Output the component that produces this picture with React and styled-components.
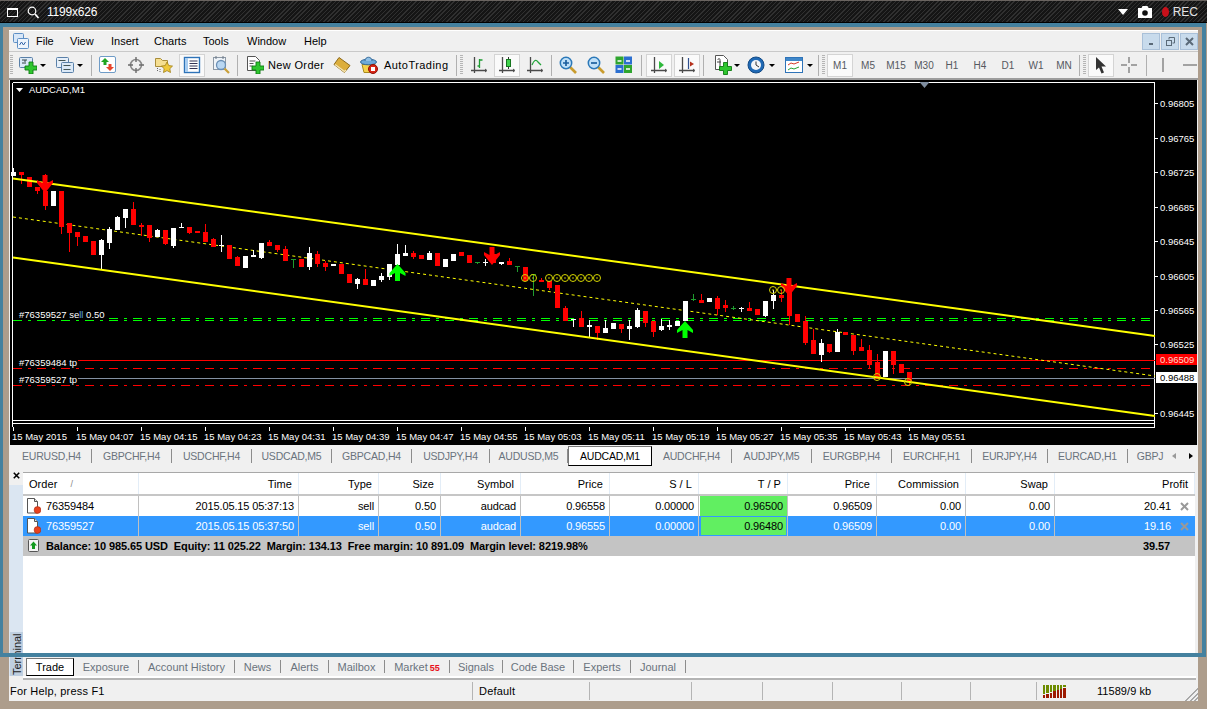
import React from 'react';
import styled, { createGlobalStyle } from 'styled-components';

const GlobalStyle = createGlobalStyle`
  html, body {
    margin: 0;
    padding: 0;
    background: #ad9d8c;
    font-family: "Liberation Sans", Arial, sans-serif;
    font-size: 11px;
    color: #000;
    overflow: hidden;
  }
`;

const Page = styled.div`
  position: relative;
  width: 1207px;
  height: 709px;
  overflow: hidden;
`;

const RecFrame = styled.div`
  position: absolute;
  left: 0;
  top: 23px;
  width: 1206px;
  height: 634px;
  box-sizing: border-box;
  border: solid #44819f;
  border-width: 4px 4px 4px 3px;
  pointer-events: none;
`;

const TopBar = styled.div`
  height: 23px;
  box-sizing: border-box;
  display: flex;
  align-items: center;
  padding: 1px 9px 0 7px;
  color: #fff;
  font-size: 12px;
  background-color: #171717;
  background-image: repeating-linear-gradient(135deg, #303030 0 1px, #151515 1px 3px);
  border-top: 1px solid #6a6460;
  border-bottom: 1px solid #000;
`;

const TopSize = styled.span`
  margin-left: 8px;
  letter-spacing: -0.2px;
`;

const TopRight = styled.div`
  margin-left: auto;
  display: flex;
  align-items: center;
  gap: 10px;
`;

const RecLabel = styled.span`
  display: flex;
  align-items: center;
  gap: 4px;
  font-size: 12px;
  color: #e4e4e4;
`;

const RecDot = styled.i`
  width: 7px;
  height: 10px;
  border-radius: 50%;
  background: #c8101a;
`;

const Window = styled.div`
  padding: 7px 9px 8px 9px;
  height: 686px;
  box-sizing: border-box;
`;

const Inner = styled.div`
  height: 671px;
  background: #f0f0f0;
  border-top: 1px solid #fff;
  box-sizing: border-box;
  display: flex;
  flex-direction: column;
`;

const MenuBar = styled.div`
  height: 21px;
  flex: none;
  box-sizing: border-box;
  display: flex;
  align-items: center;
  padding-left: 4px;
  border-bottom: 1px solid #c9c9c9;
`;

const MenuItem = styled.span`
  width: ${p => p.$w}px;
  flex: none;
`;

const WinButtons = styled.div`
  margin-left: auto;
  display: flex;
  gap: 1px;
  padding-right: 0;
`;

const WinButton = styled.div`
  width: 18px;
  height: 17px;
  box-sizing: border-box;
  border: 1px solid #a9c0d8;
  background: #c8dbec;
  display: flex;
  align-items: center;
  justify-content: center;
`;

const Toolbar = styled.div`
  height: 28px;
  flex: none;
  box-sizing: border-box;
  display: flex;
  align-items: center;
  padding-left: 1px;
  border-bottom: 2px solid #9d9d9d;
`;

const Grip = styled.div`
  width: 3px;
  height: 20px;
  flex: none;
  margin-right: ${p => p.$r}px;
  background-image: repeating-linear-gradient(#b5b5b5 0 1px, transparent 1px 2px);
`;

const Sep = styled.div`
  width: 1px;
  height: 21px;
  flex: none;
  background: #b0b0b0;
  margin: 0 ${p => p.$r}px 0 ${p => p.$l}px;
`;

const Spacer = styled.div`
  width: ${p => p.$w}px;
  flex: none;
`;

const Btn = styled.div`
  width: ${p => p.$w || 28}px;
  height: 25px;
  flex: none;
  display: flex;
  align-items: center;
  justify-content: center;
  font-size: 10px;
  color: #55595f;
  box-sizing: border-box;
  ${p => p.$on && `
    background: #fafafa;
    box-shadow: inset 0 0 0 1px #f0f0f0, inset 0 0 0 2px #d4d4d4;
  `}
`;

const TextBtn = styled.div`
  width: ${p => p.$w}px;
  height: 25px;
  flex: none;
  box-sizing: border-box;
  padding-left: 5px;
  display: flex;
  align-items: center;
  gap: ${p => p.$gap}px;
  letter-spacing: ${p => p.$ls}px;
`;

const Drop = styled.div`
  width: ${p => p.$w || 10}px;
  flex: none;
  display: flex;
  justify-content: center;
  &::before {
    content: '';
    border: solid transparent;
    border-width: 3px 3px 0 3px;
    border-top-color: #000;
  }
`;

const ChartBox = styled.div`
  height: 365px;
  flex: none;
  margin: 0 1px;
  background: #000;
  svg {
    display: block;
  }
  text {
    font-family: "Liberation Sans", Arial, sans-serif;
    font-size: 9.5px;
    fill: #fff;
  }
`;

const ChartTabs = styled.div`
  margin-top: 1px;
  height: 20px;
  flex: none;
  display: flex;
  align-items: center;
  padding-left: 3px;
  overflow: hidden;
  font-size: 10.5px;
  letter-spacing: -0.2px;
`;

const Tab = styled.div`
  width: ${p => p.$w || 80}px;
  height: ${p => (p.$on ? 20 : 14)}px;
  flex: none;
  box-sizing: border-box;
  display: flex;
  align-items: center;
  justify-content: center;
  color: ${p => (p.$on ? '#000' : '#6a737d')};
  background: ${p => (p.$on ? '#fff' : 'transparent')};
  ${p => p.$on
    ? 'border: 1px solid #000; border-top-color: #777; border-left-color: #777;'
    : p.$last ? '' : 'border-right: 1px solid #8c8c8c;'}
`;

const TabArrows = styled.div`
  margin-left: auto;
  display: flex;
  align-items: center;
  gap: 13px;
  padding-right: 7px;
`;

const TabArrow = styled.i`
  border: solid transparent;
  border-width: 3px 0 3px 4px;
  border-left-color: ${p => p.$c};
  transform: ${p => (p.$flip ? 'scaleX(-1)' : 'none')};
`;

const Terminal = styled.div`
  height: 210px;
  flex: none;
  display: grid;
  grid-template-columns: 14px 1fr;
  grid-template-rows: 191px 19px;
`;

const SideStrip = styled.div`
  grid-row: 1 / 3;
  display: flex;
  flex-direction: column;
  background: linear-gradient(#f0f0f0 0 19px, #dbe6f2 19px);
`;

const SideClose = styled.div`
  height: 19px;
  padding-top: 6px;
  box-sizing: border-box;
  display: flex;
  justify-content: center;
`;

const VerticalTab = styled.div`
  margin-top: auto;
  margin-left: 1px;
  height: 44px;
  width: 13px;
  background: #bfcfe0;
  writing-mode: vertical-rl;
  transform: rotate(180deg);
  display: flex;
  align-items: center;
  justify-content: center;
  color: #1c1c1c;
`;

const ListWrap = styled.div`
  margin-top: 6px;
  margin-right: 3px;
  background: #fff;
  border-top: 1px solid #a8a8a8;
  overflow: hidden;
`;

const COLS = '116px 160px 80px 62px 80px 89px 89px 89px 89px 89px 89px 1fr';

const HeadRow = styled.div`
  display: grid;
  grid-template-columns: ${COLS};
  height: 23px;
  box-sizing: border-box;
  border-bottom: 2px solid #c6c6c6;
`;

const HeadCell = styled.div`
  display: flex;
  align-items: center;
  justify-content: ${p => (p.$left ? 'flex-start' : 'flex-end')};
  padding: 0 6px;
  border-right: 1px solid #e3edf7;
  gap: 13px;
  letter-spacing: 0.05px;
`;

const SortMark = styled.span`
  color: #888;
  font-size: 9px;
`;

const Row = styled.div`
  display: grid;
  grid-template-columns: ${COLS};
  height: 20px;
  background: ${p => (p.$sel ? '#3399ff' : '#fff')};
  color: ${p => (p.$sel ? '#fff' : '#000')};
`;

const Cell = styled.div`
  display: flex;
  align-items: center;
  justify-content: ${p => (p.$left ? 'flex-start' : 'flex-end')};
  gap: 5px;
  padding: ${p => (p.$left ? '0 0 0 4px' : '0 4px 0 0')};
  border-right: 1px solid #c0c0c0;
  letter-spacing: -0.13px;
`;

const TpCell = styled(Cell)`
  background: #61ef61;
  color: #000;
  margin-left: 1px;
  box-shadow: ${p => (p.$sel ? 'inset 0 0 0 1px #3399ff' : 'none')};
`;

const ProfitCell = styled.div`
  display: flex;
  align-items: center;
  justify-content: flex-end;
  padding-right: 6px;
  letter-spacing: -0.13px;
`;

const ProfitValue = styled.span`
  margin-right: 9px;
`;

const SummaryRow = styled.div`
  height: 20px;
  background: #c4c4c4;
  display: flex;
  align-items: center;
  padding: 0 25px 0 5px;
  font-weight: bold;
  letter-spacing: -0.1px;
`;

const SummaryText = styled.span`
  margin-left: 6px;
  white-space: pre;
`;

const SummaryTotal = styled.span`
  margin-left: auto;
`;

const TermTabs = styled.div`
  display: flex;
  align-items: center;
  padding-left: 3px;
  background: #f0f0f0;
`;

const TermTab = styled.div`
  width: ${p => p.$w}px;
  height: ${p => (p.$on ? 18 : 13)}px;
  flex: none;
  box-sizing: border-box;
  display: flex;
  align-items: center;
  justify-content: center;
  color: ${p => (p.$on ? '#000' : '#6a737d')};
  background: ${p => (p.$on ? '#fff' : 'transparent')};
  ${p => (p.$on ? 'border: 1px solid #000; border-top-color: #777; border-left-color: #777;' : 'border-right: 1px solid #8c8c8c;')}
`;

const MarketCount = styled.sup`
  color: #e8101a;
  font-size: 9px;
  font-weight: bold;
  line-height: 1;
  margin-left: 2px;
  vertical-align: baseline;
  position: relative;
  top: 2px;
`;

const StatusRule = styled.div`
  height: 2px;
  flex: none;
  background: #fff;
  margin-left: 14px;
  margin-right: 2px;
  border-bottom: 2px solid #b4b4b4;
`;

const StatusBar = styled.div`
  flex: 1;
  display: flex;
  align-items: stretch;
  padding-top: 1px;
`;

const StatusCell = styled.div`
  width: ${p => p.$w}px;
  flex: none;
  box-sizing: border-box;
  display: flex;
  align-items: center;
  padding-left: ${p => (p.$first ? 1 : 6)}px;
  margin: 1px 0;
  border-right: 1px solid #b4b4b4;
  letter-spacing: 0.2px;
`;

const StatusLast = styled.div`
  flex: 1;
  display: flex;
  align-items: center;
  padding-left: 6px;
  position: relative;
`;

const MemoryText = styled.span`
  margin-left: 30px;
  letter-spacing: 0.05px;
`;

const ResizeGrip = styled.div`
  position: absolute;
  right: 0;
  bottom: 0;
  width: 14px;
  height: 14px;
  background: repeating-linear-gradient(135deg, #f0f0f0 0 1.5px, #a8a8a8 1.5px 3px);
  clip-path: polygon(100% 0, 100% 100%, 0 100%);
`;

// toolbar and table icons
const Svg = ({ w = 18, h = 18, children }) => (
  <svg width={w} height={h} viewBox={`0 0 ${w} ${h}`}>{children}</svg>
);

const GreenPlus = ({ x, y, s = 1 }) => (
  <path
    transform={`translate(${x} ${y}) scale(${s})`}
    d="M4 0h4v4h4v4H8v4H4V8H0V4h4z"
    fill="#2fc62f"
    stroke="#0d7a12"
    strokeWidth="0.9"
  />
);

const NewChartIcon = () => (
  <Svg>
    <rect x="0.5" y="1.5" width="13" height="10" rx="1" fill="#dbe9f7" stroke="#5a80a8" />
    <path d="M3 4h5M3 7h2M6 4v4" stroke="#344" fill="none" />
    <GreenPlus x="6" y="6" />
  </Svg>
);

const ProfilesIcon = () => (
  <Svg>
    <rect x="0.5" y="1.5" width="12" height="10" rx="1" fill="#e6eff9" stroke="#5a80a8" />
    <rect x="5.5" y="6.5" width="12" height="10" rx="1" fill="#dbe9f7" stroke="#5a80a8" />
    <path d="M2.5 4.5h7M7.5 9.5h7M7.5 13.5h7" stroke="#455" />
  </Svg>
);

const MarketIcon = () => (
  <Svg>
    <rect x="0.5" y="0.5" width="16" height="16" rx="1.5" fill="#fff" stroke="#6f9cc7" />
    <path d="M6 2l4 4H7.5v3h-3V6H2z" fill="#21a521" />
    <path d="M9.5 8h3v3H15l-4 4-4-4h2.5z" fill="#e8452c" />
  </Svg>
);

const NavigatorIcon = () => (
  <Svg>
    <circle cx="9" cy="9" r="5.5" fill="none" stroke="#8a8a8a" strokeWidth="1.6" />
    <path d="M9 1v5M9 12v5M1 9h5M12 9h5" stroke="#6b6b6b" strokeWidth="1.4" />
  </Svg>
);

const FavoritesIcon = () => (
  <Svg>
    <path d="M0.5 2.5h5l2 2h5v6h-12z" fill="#f6df91" stroke="#a98d3a" />
    <path d="M12 6l1.8 3.6 3.7.5-2.7 2.6.7 3.8-3.5-1.9-3.5 1.9.7-3.8-2.7-2.6 3.7-.5z" fill="#f0c93a" stroke="#a07f18" strokeWidth="0.8" />
    <path d="M2.5 12v4M5 13v3" stroke="#666" strokeDasharray="1 1" />
  </Svg>
);

const TerminalIcon = () => (
  <Svg>
    <rect x="1.5" y="1.5" width="15" height="15" fill="#fff" stroke="#2e73b8" strokeWidth="1.4" />
    <rect x="2" y="2" width="3" height="14" fill="#a9cdf0" />
    <path d="M6.5 5h8M6.5 7.5h8M6.5 10h8M6.5 12.5h8" stroke="#335" />
  </Svg>
);

const TesterIcon = () => (
  <Svg>
    <rect x="1.5" y="1.5" width="12" height="12" fill="#eef3f8" stroke="#8c98a5" />
    <path d="M4 0v3M11 0v3" stroke="#6b7785" />
    <circle cx="9" cy="9" r="4.5" fill="#b9d7f2" stroke="#6a8fb5" strokeWidth="1.3" />
    <path d="M12.5 12.5l4.5 4.5" stroke="#c9a03a" strokeWidth="2.2" />
  </Svg>
);

const NewOrderIcon = () => (
  <Svg>
    <path d="M1.5 0.5h8l4 4v10h-12z" fill="#fff" stroke="#555" />
    <path d="M3.5 5h6M3.5 7.5h4M3.5 10h3" stroke="#555" />
    <GreenPlus x="6" y="6" />
  </Svg>
);

const EditorIcon = () => (
  <Svg>
    <path d="M6 1.5l11 8-5.5 7-10.5-8z" fill="#dcae3c" stroke="#8d6a1c" />
    <path d="M2 8.5l9.5 7 1.5-1.5" fill="none" stroke="#f3e3b0" strokeWidth="1.4" />
  </Svg>
);

const AutoTradingIcon = () => (
  <Svg>
    <path d="M2 8.5h13l-3 8H4z" fill="#f5d24c" stroke="#a98a1e" />
    <ellipse cx="8.5" cy="6" rx="8" ry="2.8" fill="#6ea9d8" stroke="#33699a" />
    <path d="M5 5c0-5 7-5 7 0" fill="#8fc0e6" stroke="#33699a" />
    <circle cx="13" cy="13" r="4.5" fill="#d62516" stroke="#8f1208" />
    <rect x="11" y="11" width="4" height="4" fill="#fff" />
  </Svg>
);

const Axes = ({ children }) => (
  <Svg>
    <path d="M4.5 1v16M1 14.5h15" stroke="#4a4a4a" strokeWidth="1.3" />
    <path d="M15 13l2 1.5-2 1.5" fill="none" stroke="#4a4a4a" />
    {children}
  </Svg>
);

const BarsIcon = () => (
  <Axes>
    <path d="M9.5 3v9M9.5 4h3M7.5 10h2" stroke="#1e9c32" strokeWidth="1.3" fill="none" />
  </Axes>
);

const CandleIcon = () => (
  <Axes>
    <path d="M10.5 1v12" stroke="#333" />
    <rect x="8.5" y="3.5" width="4" height="7" fill="#3fd24a" stroke="#16751f" />
  </Axes>
);

const LineIcon = () => (
  <Axes>
    <path d="M6 9c2-5 4-6 6-3l3 3" stroke="#23a33a" strokeWidth="1.3" fill="none" />
  </Axes>
);

const ScrollIcon = () => (
  <Axes>
    <path d="M9 5l5 4-5 4z" fill="#2eb83c" />
  </Axes>
);

const ShiftIcon = () => (
  <Axes>
    <path d="M10.5 2v11" stroke="#2f4f8f" strokeWidth="1.2" />
    <path d="M16 8l-4-2.5v5z" fill="#b5301c" />
  </Axes>
);

const ZoomIcon = ({ plus }) => (
  <Svg>
    <path d="M11 11l6 6" stroke="#c99c2e" strokeWidth="2.6" />
    <circle cx="7" cy="7" r="5.7" fill="#bfe0f8" stroke="#2b78b8" strokeWidth="1.5" />
    <path d={plus ? 'M4 7h6M7 4v6' : 'M4 7h6'} stroke="#1c5f9e" strokeWidth="1.7" />
  </Svg>
);

const TileIcon = () => (
  <Svg>
    <rect x="0.5" y="0.5" width="8" height="8" fill="#2fa52f" />
    <rect x="9" y="0.5" width="8" height="8" fill="#2b6fd0" />
    <rect x="0.5" y="9" width="8" height="8" fill="#2b6fd0" />
    <rect x="9" y="9" width="8" height="8" fill="#2fa52f" />
    <path d="M2.5 5h4M11 5h4M2.5 13h4M11 13h4" stroke="#fff" strokeWidth="1.6" />
  </Svg>
);

const IndicatorIcon = () => (
  <Svg w={20} h={20}>
    <path d="M3.5 0.5h8l4 4v10h-12z" fill="#fff" stroke="#555" />
    <path d="M6 5c0-2 2-2 2 0v8" fill="none" stroke="#444" />
    <path d="M5 7h4" stroke="#444" />
    <GreenPlus x="7.5" y="7.5" />
  </Svg>
);

const ClockIcon = () => (
  <Svg>
    <circle cx="9" cy="9" r="8" fill="#1f69b5" stroke="#134a85" />
    <circle cx="9" cy="9" r="5" fill="#f3f6fa" />
    <path d="M9 5.5V9l3 2" stroke="#333" fill="none" />
  </Svg>
);

const TemplateIcon = () => (
  <Svg>
    <rect x="0.5" y="1.5" width="17" height="15" fill="#fff" stroke="#2e73b8" />
    <rect x="1" y="2" width="16" height="3" fill="#3f87c9" />
    <path d="M3 9l3-2 3 1 5-2" stroke="#d43a2a" fill="none" />
    <path d="M3 14l3-2 3 1 5-2" stroke="#26a233" fill="none" />
  </Svg>
);

const CursorIcon = () => (
  <Svg>
    <path d="M4 1l10 9.5H9.5l2.5 6-2.5 1-2.5-6L4 14z" fill="#333" />
  </Svg>
);

const CrossIcon = () => (
  <Svg>
    <path d="M9 1v6M9 11v6M1 9h6M11 9h6" stroke="#555" />
  </Svg>
);

const VLineIcon = () => (
  <Svg w={4} h={18}>
    <path d="M2 2v14" stroke="#555" />
  </Svg>
);

const HLineIcon = () => (
  <Svg w={14} h={4}>
    <path d="M0 2h14" stroke="#555" />
  </Svg>
);

const AppIcon = () => (
  <Svg w={16} h={16}>
    <rect x="0.5" y="0.5" width="10" height="9" rx="1" fill="#d8e7f8" stroke="#5e8fc5" />
    <rect x="4.5" y="5.5" width="11" height="10" rx="1" fill="#edf4fc" stroke="#5e8fc5" />
    <path d="M6.5 12l2-3 2 3 2-3" stroke="#2f62a8" fill="none" />
  </Svg>
);

const OrderIcon = () => (
  <Svg w={14} h={16}>
    <path d="M0.5 0.5h7l3 3v11.5h-10z" fill="#fff" stroke="#555" />
    <path d="M7.5 0.5v3h3" fill="#e4e4e4" stroke="#555" />
    <circle cx="10.5" cy="12" r="3.4" fill="#e8431f" stroke="#a82a10" strokeWidth="0.6" />
  </Svg>
);

const BalanceIcon = () => (
  <Svg w={12} h={14}>
    <rect x="0.5" y="0.5" width="10" height="12" rx="1" fill="#f4f4f4" stroke="#555" />
    <path d="M5.5 2.5l3.5 4H7v3.5H4V6.5H2z" fill="#129a1e" />
  </Svg>
);

const CloseX = ({ c = '#999', s = 9 }) => (
  <svg width={s} height={s} viewBox="0 0 9 9">
    <path d="M1 1l7 7M8 1L1 8" stroke={c} strokeWidth="2" />
  </svg>
);

// candles as [bodyTop, bodyBottom, wickTop, wickBottom, colour], one per bar, 8px apart
const CANDLES = [
  [172,176,168,176,'w'],[172,175,172,184,'r'],[177,187,177,187,'r'],[187,191,187,194,'r'],[191,206,174,210,'r'],
  [191,206,191,206,'w'],[191,227,191,234,'r'],[223,233,223,252,'r'],[232,237,232,246,'r'],[236,242,236,242,'r'],
  [241,255,241,255,'r'],[240,255,239,270,'w'],[229,243,227,249,'w'],[217,230,216,230,'w'],[209,218,209,228,'w'],
  [209,225,202,225,'r'],[225,227,223,236,'r'],[225,238,225,242,'r'],[230,237,229,237,'w'],[230,244,230,245,'r'],
  [228,246,228,248,'w'],[227,228,223,228,'w'],[227,233,227,234,'r'],[231,233,231,233,'r'],[232,242,224,242,'r'],
  [239,247,238,247,'r'],[245,246,235,252,'w'],[245,259,245,259,'r'],[257,266,256,266,'r'],[256,268,256,268,'w'],
  [255,257,250,257,'w'],[243,258,243,259,'w'],[242,246,240,246,'r'],[245,250,245,252,'r'],[249,261,246,261,'r'],
  [259,260,259,268,'g'],[259,267,259,267,'r'],[253,267,247,270,'w'],[254,264,251,267,'r'],[263,267,261,271,'r'],
  [264,266,264,266,'w'],[264,274,264,274,'r'],[274,283,274,283,'r'],[279,284,278,289,'w'],[279,285,269,285,'r'],
  [280,286,280,286,'w'],[276,280,273,282,'w'],[264,277,264,280,'w'],[254,265,244,265,'w'],[253,256,245,256,'w'],
  [253,257,251,259,'r'],[255,259,255,259,'r'],[253,260,251,260,'w'],[253,266,253,266,'r'],[259,267,259,267,'w'],
  [254,261,254,261,'w'],[252,256,252,256,'r'],[255,263,255,263,'r'],[262,263,262,264,'g'],[262,263,259,266,'w'],
  [254,263,250,263,'r'],[262,264,262,265,'w'],[261,265,258,265,'r'],[266,267,266,272,'g'],[267,281,267,281,'r'],
  [274,275,274,296,'g'],[280,282,278,282,'r'],[281,288,281,290,'r'],[285,308,285,308,'r'],[308,321,306,321,'r'],
  [319,320,319,327,'w'],[318,327,311,327,'r'],[325,327,320,338,'w'],[326,333,326,340,'r'],[328,333,320,333,'w'],
  [323,329,323,329,'w'],[324,329,324,333,'r'],[326,329,320,340,'w'],[310,327,308,328,'w'],[311,323,311,327,'r'],
  [321,332,321,337,'r'],[326,330,319,331,'w'],[325,327,320,330,'w'],[321,326,321,326,'w'],[301,321,301,321,'w'],
  [299,300,294,301,'g'],[300,303,294,303,'r'],[298,302,298,302,'w'],[298,309,296,315,'r'],[305,308,300,312,'r'],
  [308,309,306,310,'g'],[308,309,307,312,'w'],[308,311,302,311,'r'],[309,315,309,315,'r'],[301,316,301,317,'w'],
  [295,301,290,309,'w'],[295,298,290,302,'r'],[287,316,278,325,'r'],[314,322,314,322,'r'],[321,343,316,345,'r'],
  [340,354,329,354,'r'],[343,355,339,362,'w'],[344,352,344,353,'r'],[332,352,329,352,'w'],[332,335,332,335,'r'],
  [335,351,335,355,'r'],[347,351,339,351,'r'],[350,365,345,369,'r'],[362,379,354,379,'r'],[351,377,351,377,'w'],
  [351,365,351,374,'r'],[364,373,364,373,'r'],[372,381,372,385,'r'],
];

const CANDLE_COLOR = { w: '#fff', r: '#f00', g: '#1f9c2e' };

const PRICES = [
  [0.96805, 107], [0.96765, 142], [0.96725, 176], [0.96685, 211], [0.96645, 245],
  [0.96605, 280], [0.96565, 314], [0.96525, 348], [0.96445, 417],
];

const TIMES = [
  '15 May 2015', '15 May 04:07', '15 May 04:15', '15 May 04:23', '15 May 04:31',
  '15 May 04:39', '15 May 04:47', '15 May 04:55', '15 May 05:03', '15 May 05:11',
  '15 May 05:19', '15 May 05:27', '15 May 05:35', '15 May 05:43', '15 May 05:51',
];

const RINGS = [
  [525, 278], [533, 278], [549, 278], [557, 278], [565, 278], [573, 278], [581, 278], [589, 278], [597, 278],
  [773, 290], [781, 290], [877, 377], [908, 382],
];

const downArrow = (cx, y) =>
  `${cx - 2.5},${y} ${cx + 2.5},${y} ${cx + 2.5},${y + 8} ${cx + 8},${y + 5} ${cx + 8},${y + 8} ${cx},${y + 18} ${cx - 8},${y + 8} ${cx - 8},${y + 5} ${cx - 2.5},${y + 8}`;

const upArrow = (cx, y) =>
  `${cx - 2.5},${y} ${cx + 2.5},${y} ${cx + 2.5},${y - 8} ${cx + 8},${y - 5} ${cx + 8},${y - 8} ${cx},${y - 17} ${cx - 8},${y - 8} ${cx - 8},${y - 5} ${cx - 2.5},${y - 8}`;

const DASH_DOT = '9 6 3 6';

const Chart = () => (
  <ChartBox>
    <svg width="1187" height="365" viewBox="10 80 1187 365">
      <g shapeRendering="crispEdges" fill="none">
        <path d="M12.5 82.5H1154.5V427M12.5 82.5V427" stroke="#fff" />
        <path d="M12 420.5H1155M12 423H1155M800 427H1155" stroke="#fff" />
        {PRICES.map(([, y]) => (
          <path key={y} d={`M1155 ${y - 3.5}h3`} stroke="#fff" />
        ))}
        {TIMES.map((t, i) => (
          <path key={t} d={`M${13.5 + 64 * i} 427v4`} stroke="#fff" />
        ))}
        <path d="M13 320.5H1150" stroke="#0f0" strokeDasharray={DASH_DOT} />
        <path d="M109 318.5H1150" stroke="#0f0" strokeDasharray={DASH_DOT} />
        <path d="M78 360.5H1155" stroke="#f00" />
        <path d="M78 378.5H1155" stroke="#8491a3" />
        <path d="M13 368.5H1155M13 385.5H1155" stroke="#f00" strokeDasharray={DASH_DOT} />
      </g>
      <path d="M13 217L1155 376" stroke="#ff0" strokeDasharray="3 3" fill="none" />
      <g shapeRendering="crispEdges">
        {CANDLES.map(([top, bottom, wickTop, wickBottom, c], i) => {
          const x = 13 + 8 * i;
          const fill = CANDLE_COLOR[c];
          return (
            <g key={i} fill={fill}>
              <rect x={x} y={wickTop} width="1" height={wickBottom - wickTop} />
              <rect x={x - 2} y={top} width="5" height={bottom - top} />
            </g>
          );
        })}
      </g>
      <path d="M13 178.5L1155 336M13 257.5L1155 416" stroke="#ff0" strokeWidth="2" fill="none" />
      <polygon points={downArrow(45, 175)} fill="#f00" />
      <polygon points={downArrow(492, 247)} fill="#f00" />
      <polygon points={downArrow(789, 278)} fill="#f00" />
      <polygon points={upArrow(397.5, 281)} fill="#0f0" />
      <polygon points={upArrow(685, 338)} fill="#0f0" />
      {RINGS.map(([x, y]) => (
        <g key={x}>
          <circle cx={x} cy={y} r="3.5" fill="none" stroke="#d6d600" strokeWidth="1" />
          <circle cx={x} cy={y} r="0.8" fill="#d6d600" />
        </g>
      ))}
      <path d="M919.5 82h10l-5 6z" fill="#7f8ea0" />
      <path d="M16 88h7l-3.5 4z" fill="#fff" />
      <text x="29" y="93">AUDCAD,M1</text>
      <text x="19" y="318">#76359527 se<tspan fill="#5aa7e6">ll</tspan> 0.50</text>
      <text x="19" y="366">#76359484 tp</text>
      <text x="19" y="383">#76359527 tp</text>
      {PRICES.map(([p, y]) => (
        <text key={p} x="1160" y={y}>{p.toFixed(5)}</text>
      ))}
      <rect x="1156" y="354" width="41" height="11" fill="#f00" />
      <text x="1160" y="363" style={{ fill: '#ffd9c9' }}>0.96509</text>
      <rect x="1156" y="372" width="41" height="11" fill="#fff" />
      <text x="1160" y="381" style={{ fill: '#000' }}>0.96488</text>
      {TIMES.map((t, i) => (
        <text key={t} x={12 + 64 * i} y="440">{t}</text>
      ))}
    </svg>
  </ChartBox>
);

const MENU = [['File', 34], ['View', 41], ['Insert', 43], ['Charts', 49], ['Tools', 44], ['Window', 57], ['Help', 40]];

const PERIODS = ['M1', 'M5', 'M15', 'M30', 'H1', 'H4', 'D1', 'W1', 'MN'];

const SYMBOL_TABS = [
  ['EURUSD,H4', 80], ['GBPCHF,H4', 80], ['USDCHF,H4', 80], ['USDCAD,M5', 80], ['GBPCAD,H4', 80],
  ['USDJPY,H4', 78], ['AUDUSD,M5', 78],
];

const SYMBOL_TABS_AFTER = [
  ['AUDCHF,H4', 80], ['AUDJPY,M5', 80], ['EURGBP,H4', 80], ['EURCHF,H1', 80], ['EURJPY,H4', 76], ['EURCAD,H1', 80],
];

const TERM_TABS = [
  ['Exposure', 65], ['Account History', 96], ['News', 46], ['Alerts', 48], ['Mailbox', 56],
  ['Market', 65], ['Signals', 53], ['Code Base', 71], ['Experts', 57], ['Journal', 55],
];

const HEADERS = ['Time', 'Type', 'Size', 'Symbol', 'Price', 'S / L', 'T / P', 'Price', 'Commission', 'Swap', 'Profit'];

const ORDERS = [
  { id: 76359484, time: '2015.05.15 05:37:13', price: '0.96558', tp: '0.96500', profit: '20.41' },
  { id: 76359527, time: '2015.05.15 05:37:50', price: '0.96555', tp: '0.96480', profit: '19.16', sel: true },
];

const SUMMARY = 'Balance: 10 985.65 USD  Equity: 11 025.22  Margin: 134.13  Free margin: 10 891.09  Margin level: 8219.98%';

const SignalBars = () => (
  <svg width="24" height="13" viewBox="0 0 24 13" shapeRendering="crispEdges">
    {[0, 1, 2, 3, 4, 5, 6].map(i => (
      <g key={i}>
        <rect x={i * 3.4} y="0" width="2.4" height={9 - i * 1.1} fill="#6d8c00" />
        <rect x={i * 3.4} y={10 - i * 1.25} width="2.4" height={3 + i * 1.25} fill="#9c1a00" />
      </g>
    ))}
  </svg>
);

const App = () => (
  <Page>
    <GlobalStyle />
    <TopBar>
      <svg width="11" height="9" viewBox="0 0 11 9">
        <rect x="0.5" y="0.5" width="10" height="8" fill="none" stroke="#fff" />
        <path d="M0 1.5h11" stroke="#fff" />
      </svg>
      <Spacer $w={9} />
      <svg width="12" height="13" viewBox="0 0 12 13">
        <circle cx="5" cy="5" r="3.8" fill="none" stroke="#fff" strokeWidth="1.2" />
        <path d="M8 8l3.5 4" stroke="#fff" strokeWidth="1.8" />
      </svg>
      <TopSize>1199x626</TopSize>
      <TopRight>
        <svg width="10" height="6" viewBox="0 0 10 6">
          <path d="M0 0h10L5 6z" fill="#fff" />
        </svg>
        <svg width="14" height="12" viewBox="0 0 14 12">
          <path d="M0 2h3.5l1-2h5l1 2H14v10H0z" fill="#fff" />
          <circle cx="7" cy="7" r="2.8" fill="#111" />
        </svg>
        <RecLabel>
          <RecDot />
          REC
        </RecLabel>
      </TopRight>
    </TopBar>
    <Window>
      <Inner>
        <MenuBar>
          <AppIcon />
          <Spacer $w={7} />
          {MENU.map(([label, w]) => (
            <MenuItem key={label} $w={w}>{label}</MenuItem>
          ))}
          <WinButtons>
            <WinButton>
              <svg width="7" height="7" viewBox="0 0 7 7"><path d="M1 6h4" stroke="#5a6a78" strokeWidth="2" /></svg>
            </WinButton>
            <WinButton>
              <svg width="9" height="9" viewBox="0 0 9 9" fill="none" stroke="#5a6a78">
                <rect x="0.5" y="3.5" width="5" height="5" />
                <path d="M3 2.5v-2h5.5v5.5h-2" />
              </svg>
            </WinButton>
            <WinButton><CloseX c="#5a6a78" /></WinButton>
          </WinButtons>
        </MenuBar>
        <Toolbar>
          <Grip $r={4} />
          <Btn $w={21}><NewChartIcon /></Btn>
          <Drop />
          <Spacer $w={6} />
          <Btn $w={21}><ProfilesIcon /></Btn>
          <Drop />
          <Sep $l={6} $r={2} />
          <Btn><MarketIcon /></Btn>
          <Btn><NavigatorIcon /></Btn>
          <Btn><FavoritesIcon /></Btn>
          <Btn $on><TerminalIcon /></Btn>
          <Btn $w={29}><TesterIcon /></Btn>
          <Sep $l={2} $r={3} />
          <TextBtn $w={88} $gap={4} $ls={0.35}><NewOrderIcon />New Order</TextBtn>
          <Btn $w={26}><EditorIcon /></Btn>
          <TextBtn $w={97} $gap={6} $ls={0.45}><AutoTradingIcon />AutoTrading</TextBtn>
          <Sep $l={4} $r={3} />
          <Grip $r={2} />
          <Btn><BarsIcon /></Btn>
          <Btn $on><CandleIcon /></Btn>
          <Btn><LineIcon /></Btn>
          <Sep $l={2} $r={2} />
          <Btn><ZoomIcon plus /></Btn>
          <Btn><ZoomIcon /></Btn>
          <Btn><TileIcon /></Btn>
          <Sep $l={3} $r={3} />
          <Btn $on><ScrollIcon /></Btn>
          <Btn $on><ShiftIcon /></Btn>
          <Sep $l={2} $r={6} />
          <Btn $w={24}><IndicatorIcon /></Btn>
          <Drop $w={5} />
          <Spacer $w={5} />
          <Btn $w={24}><ClockIcon /></Btn>
          <Drop $w={8} />
          <Spacer $w={6} />
          <Btn $w={24}><TemplateIcon /></Btn>
          <Drop $w={8} />
          <Sep $l={4} $r={3} />
          <Grip $r={1} />
          {PERIODS.map(p => (
            <Btn key={p} $on={p === 'M1'}>{p}</Btn>
          ))}
          <Sep $l={1} $r={3} />
          <Grip $r={1} />
          <Btn $on><CursorIcon /></Btn>
          <Btn><CrossIcon /></Btn>
          <Sep $l={3} $r={0} />
          <Btn $w={32}><VLineIcon /></Btn>
          <Btn $w={22}><HLineIcon /></Btn>
        </Toolbar>
        <Chart />
        <ChartTabs>
          {SYMBOL_TABS.map(([label, w]) => (
            <Tab key={label} $w={w}>{label}</Tab>
          ))}
          <Tab $on $w={84}>AUDCAD,M1</Tab>
          {SYMBOL_TABS_AFTER.map(([label, w]) => (
            <Tab key={label} $w={w}>{label}</Tab>
          ))}
          <Tab $last $w={44}>GBPJ</Tab>
          <TabArrows>
            <TabArrow $flip $c="#999" />
            <TabArrow $c="#000" />
          </TabArrows>
        </ChartTabs>
        <Terminal>
          <SideStrip>
            <SideClose><CloseX c="#000" s={7} /></SideClose>
            <VerticalTab>Terminal</VerticalTab>
          </SideStrip>
          <ListWrap>
            <HeadRow>
              <HeadCell $left>Order <SortMark>/</SortMark></HeadCell>
              {HEADERS.map((h, i) => (
                <HeadCell key={i}>{h}</HeadCell>
              ))}
            </HeadRow>
            {ORDERS.map(o => (
              <Row key={o.id} $sel={o.sel}>
                <Cell $left><OrderIcon />{o.id}</Cell>
                <Cell>{o.time}</Cell>
                <Cell>sell</Cell>
                <Cell>0.50</Cell>
                <Cell>audcad</Cell>
                <Cell>{o.price}</Cell>
                <Cell>0.00000</Cell>
                <TpCell $sel={o.sel}>{o.tp}</TpCell>
                <Cell>0.96509</Cell>
                <Cell>0.00</Cell>
                <Cell>0.00</Cell>
                <ProfitCell>
                  <ProfitValue>{o.profit}</ProfitValue>
                  <CloseX />
                </ProfitCell>
              </Row>
            ))}
            <SummaryRow>
              <BalanceIcon />
              <SummaryText>{SUMMARY}</SummaryText>
              <SummaryTotal>39.57</SummaryTotal>
            </SummaryRow>
          </ListWrap>
          <TermTabs>
            <TermTab $on $w={48}>Trade</TermTab>
            {TERM_TABS.map(([label, w]) => (
              <TermTab key={label} $w={w}>
                {label}
                {label === 'Market' && <MarketCount>55</MarketCount>}
              </TermTab>
            ))}
          </TermTabs>
        </Terminal>
        <StatusRule />
        <StatusBar>
          <StatusCell $first $w={464}>For Help, press F1</StatusCell>
          <StatusCell $w={117}>Default</StatusCell>
          <StatusCell $w={102} />
          <StatusCell $w={71} />
          <StatusCell $w={70} />
          <StatusCell $w={69} />
          <StatusCell $w={69} />
          <StatusCell $w={66} />
          <StatusLast>
            <SignalBars />
            <MemoryText>11589/9 kb</MemoryText>
            <ResizeGrip />
          </StatusLast>
        </StatusBar>
      </Inner>
    </Window>
    <RecFrame />
  </Page>
);

export default App;
